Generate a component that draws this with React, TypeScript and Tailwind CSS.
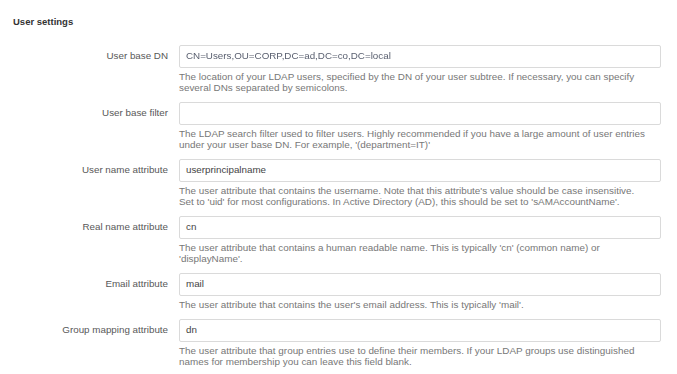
const fields = [
  {
    label: 'User base DN',
    value: 'CN=Users,OU=CORP,DC=ad,DC=co,DC=local',
    blurred: true,
    help: [
      'The location of your LDAP users, specified by the DN of your user subtree. If necessary, you can specify',
      'several DNs separated by semicolons.',
    ],
  },
  {
    label: 'User base filter',
    value: '',
    help: [
      'The LDAP search filter used to filter users. Highly recommended if you have a large amount of user entries',
      "under your user base DN. For example, '(department=IT)'",
    ],
  },
  {
    label: 'User name attribute',
    value: 'userprincipalname',
    help: [
      "The user attribute that contains the username. Note that this attribute's value should be case insensitive.",
      "Set to 'uid' for most configurations. In Active Directory (AD), this should be set to 'sAMAccountName'.",
    ],
  },
  {
    label: 'Real name attribute',
    value: 'cn',
    help: [
      "The user attribute that contains a human readable name. This is typically 'cn' (common name) or",
      "'displayName'.",
    ],
  },
  {
    label: 'Email attribute',
    value: 'mail',
    help: ["The user attribute that contains the user's email address. This is typically 'mail'."],
  },
  {
    label: 'Group mapping attribute',
    value: 'dn',
    help: [
      'The user attribute that group entries use to define their members. If your LDAP groups use distinguished',
      'names for membership you can leave this field blank.',
    ],
  },
];

export default function App() {
  return (
    <div className="w-[677px] h-[374px] overflow-hidden bg-white font-['Liberation_Sans',Arial,sans-serif] px-[13px] pt-[16px]">
      <h2 className="text-[9.5px] font-bold text-[#333] leading-[12px]">User settings</h2>

      <div className="mt-[17px] flex flex-col gap-[9px]">
        {fields.map((f) => (
          <div key={f.label} className="grid grid-cols-[155px_482px] gap-x-[11px]">
            <label className="h-[23px] flex items-center justify-end text-[9.8px] text-[#585858] whitespace-nowrap">
              {f.label}
            </label>
            <div>
              <div className="h-[23px] border border-[#dadada] rounded-[2px] flex items-center px-[6px] text-[9.8px] text-[#444]">
                <span className={f.blurred ? 'blur-[0.7px] text-[#5a6070]' : ''}>{f.value}</span>
              </div>
              <div className="mt-[3px] text-[9.9px] leading-[11px] text-[#777]">
                {f.help.map((line) => (
                  <p key={line} className="whitespace-nowrap">
                    {line}
                  </p>
                ))}
              </div>
            </div>
          </div>
        ))}
      </div>
    </div>
  );
}
